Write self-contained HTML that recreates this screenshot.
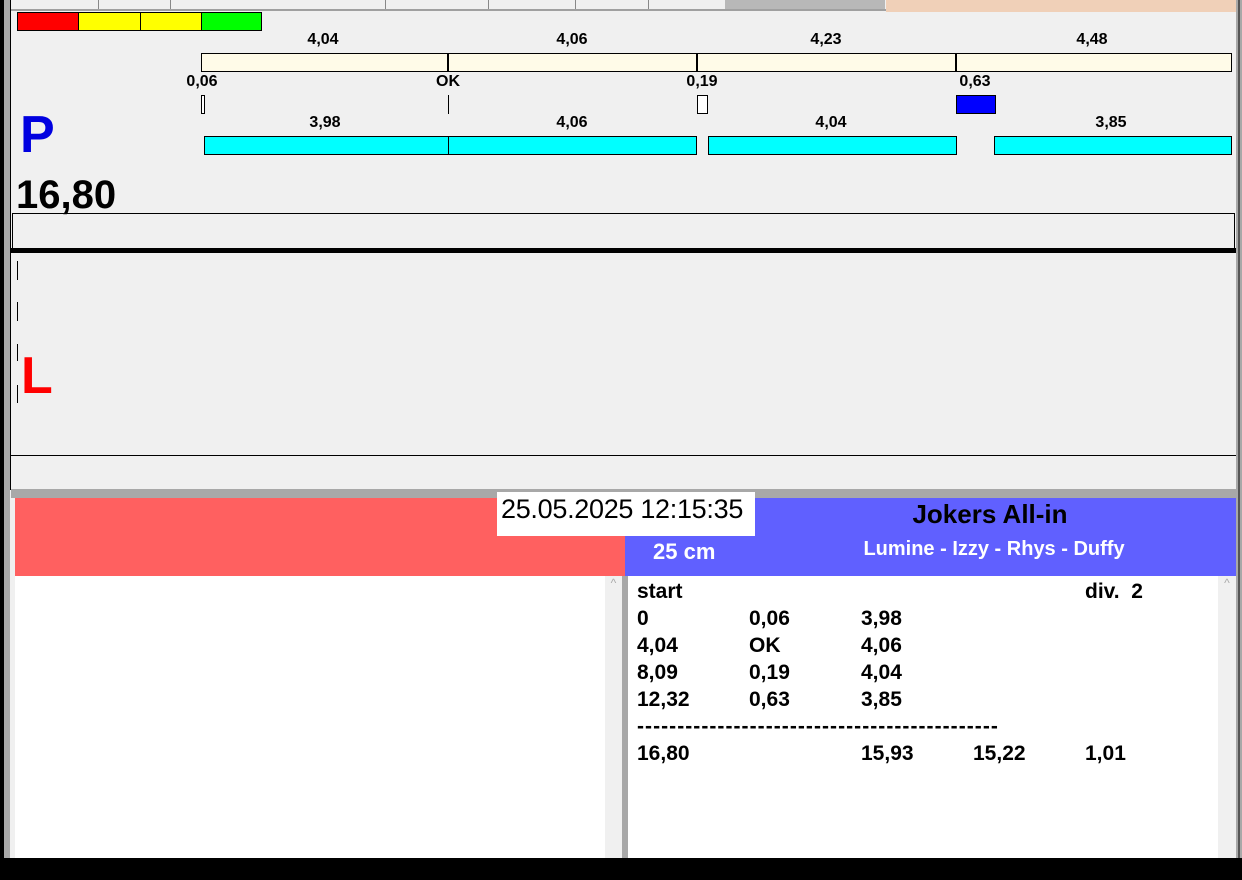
<!DOCTYPE html>
<html><head><meta charset="utf-8"><style>
*{margin:0;padding:0;box-sizing:border-box}
body{width:1242px;height:880px;background:#f0f0f0;position:relative;overflow:hidden;font-family:"Liberation Sans",Arial,sans-serif}
.a{position:absolute}
.b{font-weight:bold}
.lbl{position:absolute;font-weight:bold;font-size:16px;color:#000;transform:translateX(-50%);line-height:16px}
.row{position:absolute;left:637px;font-weight:bold;font-size:21px;line-height:27px;color:#000}
.row span{position:absolute;white-space:nowrap}
</style></head><body>
<div class="a" style="left:0;top:0;width:4px;height:880px;background:#000"></div>
<div class="a" style="left:4px;top:0;width:6px;height:880px;background:#a8a8a8"></div>
<div class="a" style="left:10px;top:0;width:1px;height:490px;background:#000"></div>
<div class="a" style="left:1236px;top:0;width:6px;height:880px;background:#a8a8a8"></div>
<div class="a" style="left:1238px;top:0;width:2px;height:880px;background:#555"></div>
<div class="a" style="left:11px;top:0;width:875px;height:11px;background:#f0f0f0;border-bottom:2px solid #a0a0a0"></div>
<div class="a" style="left:98px;top:0;width:1px;height:9px;background:#888"></div>
<div class="a" style="left:170px;top:0;width:1px;height:9px;background:#888"></div>
<div class="a" style="left:385px;top:0;width:1px;height:9px;background:#888"></div>
<div class="a" style="left:488px;top:0;width:1px;height:9px;background:#888"></div>
<div class="a" style="left:575px;top:0;width:1px;height:9px;background:#888"></div>
<div class="a" style="left:648px;top:0;width:1px;height:9px;background:#888"></div>
<div class="a" style="left:725px;top:0;width:160px;height:9px;background:#b8b8b8"></div>
<div class="a" style="left:886px;top:0;width:350px;height:12px;background:#f0d0b8"></div>
<div class="a" style="left:17px;top:12px;width:62px;height:19px;background:#f00;border:1px solid #000"></div>
<div class="a" style="left:78px;top:12px;width:63px;height:19px;background:#ff0;border:1px solid #000"></div>
<div class="a" style="left:140px;top:12px;width:62px;height:19px;background:#ff0;border:1px solid #000"></div>
<div class="a" style="left:201px;top:12px;width:61px;height:19px;background:#0f0;border:1px solid #000"></div>
<div class="a" style="left:201px;top:53px;width:1031px;height:19px;background:#fffbe8;border:1px solid #000"></div>
<div class="a" style="left:447px;top:53px;width:2px;height:19px;background:#000"></div>
<div class="a" style="left:696px;top:53px;width:2px;height:19px;background:#000"></div>
<div class="a" style="left:955px;top:53px;width:2px;height:19px;background:#000"></div>
<div class="lbl" style="left:323px;top:32px">4,04</div>
<div class="lbl" style="left:572px;top:32px">4,06</div>
<div class="lbl" style="left:826px;top:32px">4,23</div>
<div class="lbl" style="left:1092px;top:32px">4,48</div>
<div class="lbl" style="left:202px;top:74px">0,06</div>
<div class="lbl" style="left:448px;top:74px">OK</div>
<div class="lbl" style="left:702px;top:74px">0,19</div>
<div class="lbl" style="left:975px;top:74px">0,63</div>
<div class="a" style="left:201px;top:95px;width:4px;height:19px;border:1px solid #000;background:#fff"></div>
<div class="a" style="left:448px;top:95px;width:1px;height:19px;background:#000"></div>
<div class="a" style="left:697px;top:95px;width:11px;height:19px;border:1px solid #000;background:#fff"></div>
<div class="a" style="left:956px;top:95px;width:40px;height:19px;border:1px solid #000;background:#0000ff"></div>
<div class="a" style="left:204px;top:136px;width:493px;height:19px;background:#00ffff;border:1px solid #000"></div>
<div class="a" style="left:448px;top:136px;width:1px;height:19px;background:#000"></div>
<div class="a" style="left:708px;top:136px;width:249px;height:19px;background:#00ffff;border:1px solid #000"></div>
<div class="a" style="left:994px;top:136px;width:238px;height:19px;background:#00ffff;border:1px solid #000"></div>
<div class="lbl" style="left:325px;top:115px">3,98</div>
<div class="lbl" style="left:572px;top:115px">4,06</div>
<div class="lbl" style="left:831px;top:115px">4,04</div>
<div class="lbl" style="left:1111px;top:115px">3,85</div>
<div class="a b" style="left:20px;top:107px;font-size:52px;line-height:56px;color:#0000e0">P</div>
<div class="a b" style="left:16px;top:174px;font-size:40px;line-height:42px;color:#000">16,80</div>
<div class="a" style="left:12px;top:213px;width:1223px;height:36px;border:1px solid #000;border-bottom:none"></div>
<div class="a" style="left:11px;top:248px;width:1225px;height:5px;background:#000"></div>
<div class="a" style="left:17px;top:261px;width:1px;height:19px;background:#000"></div>
<div class="a" style="left:17px;top:302px;width:1px;height:19px;background:#000"></div>
<div class="a" style="left:17px;top:344px;width:1px;height:17px;background:#000"></div>
<div class="a" style="left:17px;top:385px;width:1px;height:18px;background:#000"></div>
<div class="a b" style="left:21px;top:348px;font-size:52px;line-height:56px;color:#f00">L</div>
<div class="a" style="left:11px;top:455px;width:1225px;height:1px;background:#000"></div>
<div class="a" style="left:11px;top:489px;width:1225px;height:9px;background:#a8a8a8"></div>
<div class="a" style="left:15px;top:498px;width:610px;height:78px;background:#ff6060"></div>
<div class="a" style="left:625px;top:498px;width:611px;height:78px;background:#6060ff"></div>
<div class="a" style="left:497px;top:492px;width:258px;height:44px;background:#fff"></div>
<div class="a" style="left:501px;top:494px;font-size:27px;line-height:30px;color:#000;letter-spacing:-0.3px">25.05.2025 12:15:35</div>
<div class="a b" style="left:755px;width:470px;top:499px;text-align:center;font-size:26px;line-height:30px;color:#000">Jokers All-in</div>
<div class="a b" style="left:759px;width:470px;top:537px;text-align:center;font-size:20px;line-height:24px;color:#fff">Lumine - Izzy - Rhys - Duffy</div>
<div class="a b" style="left:653px;top:539px;font-size:22px;line-height:26px;color:#fff">25 cm</div>
<div class="a" style="left:15px;top:576px;width:590px;height:282px;background:#fff"></div>
<div class="a" style="left:605px;top:576px;width:17px;height:282px;background:#f0f0f0;color:#aaa;font-size:12px;text-align:center">^</div>
<div class="a" style="left:622px;top:576px;width:6px;height:282px;background:#a8a8a8"></div>
<div class="a" style="left:628px;top:576px;width:590px;height:282px;background:#fff"></div>
<div class="a" style="left:1218px;top:576px;width:18px;height:282px;background:#f0f0f0;color:#aaa;font-size:12px;text-align:center">^</div>
<div class="row" style="top:578px"><span style="left:0">start</span><span style="left:448px">div.&nbsp; 2</span></div>
<div class="row" style="top:605px"><span style="left:0">0</span><span style="left:112px">0,06</span><span style="left:224px">3,98</span></div>
<div class="row" style="top:632px"><span style="left:0">4,04</span><span style="left:112px">OK</span><span style="left:224px">4,06</span></div>
<div class="row" style="top:659px"><span style="left:0">8,09</span><span style="left:112px">0,19</span><span style="left:224px">4,04</span></div>
<div class="row" style="top:686px"><span style="left:0">12,32</span><span style="left:112px">0,63</span><span style="left:224px">3,85</span></div>
<div class="row" style="top:713px"><span style="left:0;letter-spacing:1.05px">---------------------------------------------</span></div>
<div class="row" style="top:740px"><span style="left:0">16,80</span><span style="left:224px">15,93</span><span style="left:336px">15,22</span><span style="left:448px">1,01</span></div>
<div class="a" style="left:0;top:858px;width:1242px;height:22px;background:#000"></div>
</body></html>
